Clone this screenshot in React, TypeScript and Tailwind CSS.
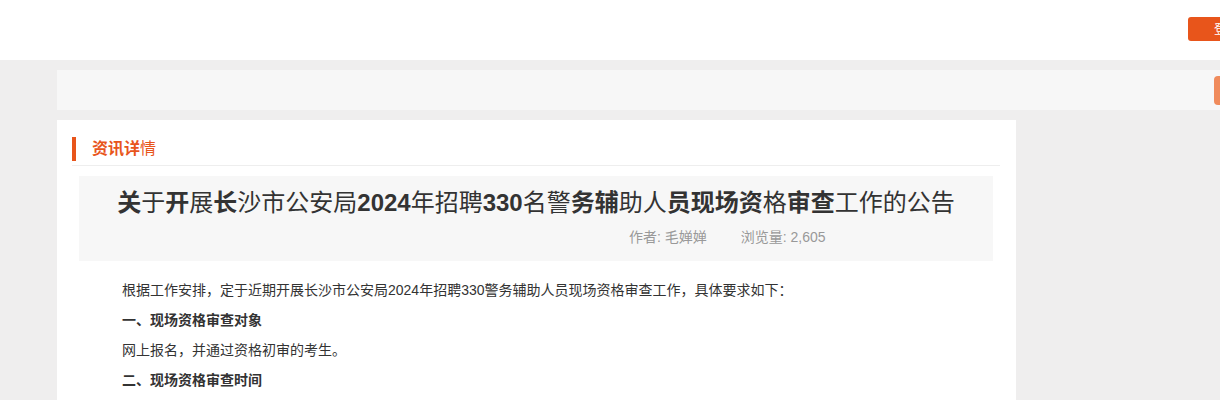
const font = "font-['Liberation_Sans','Noto_Sans_CJK_SC',sans-serif]";

function TitleText() {
  const parts: [string, boolean][] = [
    ["关", true],
    ["于", false],
    ["开", true],
    ["展", false],
    ["长", true],
    ["沙市公安局", false],
    ["2024", true],
    ["年招聘", false],
    ["330", true],
    ["名警", false],
    ["务辅", true],
    ["助人", false],
    ["员现场资", true],
    ["格", false],
    ["审查", true],
    ["工作的公告", false],
  ];
  return (
    <h1 className="text-center text-[24px] leading-[32px] text-[#333] font-normal">
      {parts.map(([t, b], i) => (
        <span key={i} className={b ? "font-bold" : "font-normal"}>
          {t}
        </span>
      ))}
    </h1>
  );
}

export default function App() {
  return (
    <div className={`${font} w-[1220px] h-[400px] overflow-hidden bg-[#efeeee]`}>
      <header className="h-[60px] bg-white flex justify-end items-start pt-[17px]">
        <button className="mr-[-40px] h-[24px] w-[72px] rounded-[3px] bg-[#e8551b] text-white text-[13px] text-left pl-[26px] leading-[24px]">
          登录
        </button>
      </header>

      <div className="pt-[10px] pl-[57px]">
        <div className="h-[40px] bg-[#f7f7f7] flex justify-end items-center">
          <div className="mr-[-20px] h-[29px] w-[26px] rounded-[4px] bg-[#f08b5c]" />
        </div>

        <div className="mt-[10px] w-[959px] bg-white pt-[17px] pl-[15px] pr-[16px] pb-[20px]">
          <div className="flex items-center h-[24px]">
            <div className="w-[4px] h-[24px] bg-[#e8551b]" />
            <span className="ml-[16px] text-[16px] leading-[22px] text-[#e8551b]">
              <span className="font-bold">资讯详</span>情
            </span>
          </div>
          <div className="mt-[4px] border-t border-[#eeeeee]" />

          <div className="mt-[10px] ml-[7px] w-[914px] h-[85px] bg-[#f7f7f7] pt-[11px]">
            <TitleText />
            <div className="mt-[8px] pl-[550px] flex gap-[34px] text-[14px] leading-[20px] text-[#999]">
              <span>作者: 毛婵婵</span>
              <span>浏览量: 2,605</span>
            </div>
          </div>

          <div className="pl-[50px] pt-[14px] text-[14px] leading-[30px] text-[#333]">
            <p>根据工作安排，定于近期开展长沙市公安局2024年招聘330警务辅助人员现场资格审查工作，具体要求如下：</p>
            <p className="font-bold">一、现场资格审查对象</p>
            <p>网上报名，并通过资格初审的考生。</p>
            <p className="font-bold">二、现场资格审查时间</p>
          </div>
        </div>
      </div>
    </div>
  );
}
